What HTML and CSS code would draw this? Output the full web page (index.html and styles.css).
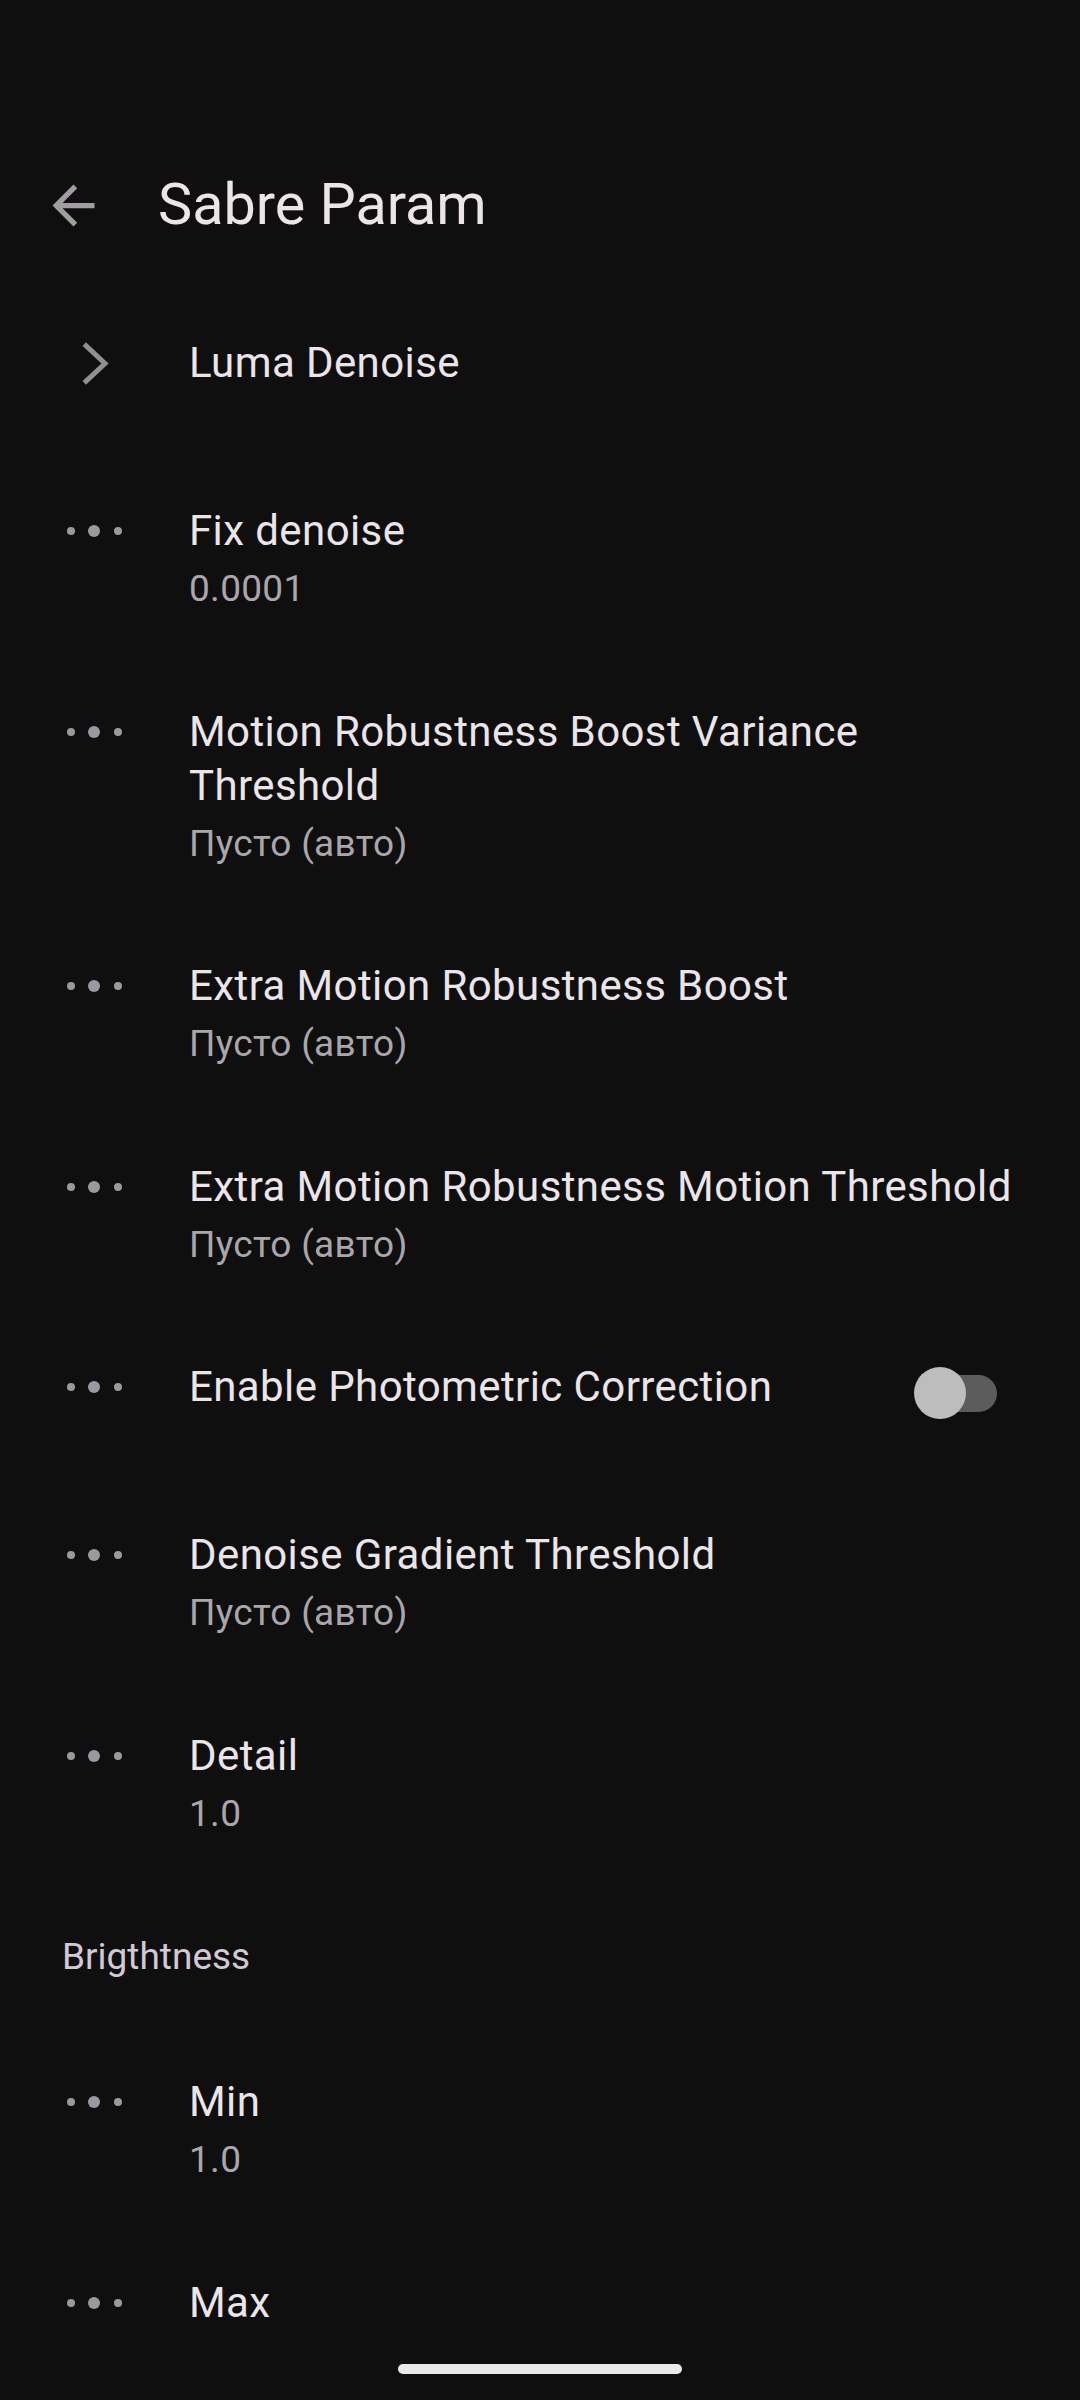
FILE: index.html
```html
<!DOCTYPE html>
<html lang="ru">
<head>
  <meta charset="UTF-8">
  <title>Sabre Param</title>
  <link rel="stylesheet" href="styles.css">
</head>
<body>
  <div class="screen">
    <header class="toolbar">
      <span class="back">
        <svg viewBox="0 0 24 24"><path d="M7.825 13l5.6 5.6L12 20l-8-8 8-8 1.425 1.4-5.6 5.6H20v2z"/></svg>
      </span>
      <h1 class="title">Sabre Param</h1>
    </header>

    <div class="list">
      <div class="row">
        <span class="icon">
          <svg class="chevron" viewBox="0 0 24 24"><polyline points="8.1,4.6 16,12 8.1,19.4"/></svg>
        </span>
        <div class="text"><div class="name">Luma Denoise</div></div>
      </div>

      <div class="row">
        <span class="icon"><svg class="dots" viewBox="0 0 63 24"><circle cx="8" cy="12" r="4"/><circle cx="31" cy="12" r="6"/><circle cx="55" cy="12" r="4"/></svg></span>
        <div class="text">
          <div class="name">Fix denoise</div>
          <div class="value">0.0001</div>
        </div>
      </div>

      <div class="row">
        <span class="icon"><svg class="dots" viewBox="0 0 63 24"><circle cx="8" cy="12" r="4"/><circle cx="31" cy="12" r="6"/><circle cx="55" cy="12" r="4"/></svg></span>
        <div class="text">
          <div class="name">Motion Robustness Boost Variance Threshold</div>
          <div class="value">Пусто (авто)</div>
        </div>
      </div>

      <div class="row">
        <span class="icon"><svg class="dots" viewBox="0 0 63 24"><circle cx="8" cy="12" r="4"/><circle cx="31" cy="12" r="6"/><circle cx="55" cy="12" r="4"/></svg></span>
        <div class="text">
          <div class="name">Extra Motion Robustness Boost</div>
          <div class="value">Пусто (авто)</div>
        </div>
      </div>

      <div class="row">
        <span class="icon"><svg class="dots" viewBox="0 0 63 24"><circle cx="8" cy="12" r="4"/><circle cx="31" cy="12" r="6"/><circle cx="55" cy="12" r="4"/></svg></span>
        <div class="text">
          <div class="name">Extra Motion Robustness Motion Threshold</div>
          <div class="value">Пусто (авто)</div>
        </div>
      </div>

      <div class="row">
        <span class="icon"><svg class="dots" viewBox="0 0 63 24"><circle cx="8" cy="12" r="4"/><circle cx="31" cy="12" r="6"/><circle cx="55" cy="12" r="4"/></svg></span>
        <div class="text"><div class="name">Enable Photometric Correction</div></div>
        <span class="switch"><span class="track"></span><span class="thumb"></span></span>
      </div>

      <div class="row">
        <span class="icon"><svg class="dots" viewBox="0 0 63 24"><circle cx="8" cy="12" r="4"/><circle cx="31" cy="12" r="6"/><circle cx="55" cy="12" r="4"/></svg></span>
        <div class="text">
          <div class="name">Denoise Gradient Threshold</div>
          <div class="value">Пусто (авто)</div>
        </div>
      </div>

      <div class="row">
        <span class="icon"><svg class="dots" viewBox="0 0 63 24"><circle cx="8" cy="12" r="4"/><circle cx="31" cy="12" r="6"/><circle cx="55" cy="12" r="4"/></svg></span>
        <div class="text">
          <div class="name">Detail</div>
          <div class="value">1.0</div>
        </div>
      </div>

      <div class="category">Brigthtness</div>

      <div class="row">
        <span class="icon"><svg class="dots" viewBox="0 0 63 24"><circle cx="8" cy="12" r="4"/><circle cx="31" cy="12" r="6"/><circle cx="55" cy="12" r="4"/></svg></span>
        <div class="text">
          <div class="name">Min</div>
          <div class="value">1.0</div>
        </div>
      </div>

      <div class="row">
        <span class="icon"><svg class="dots" viewBox="0 0 63 24"><circle cx="8" cy="12" r="4"/><circle cx="31" cy="12" r="6"/><circle cx="55" cy="12" r="4"/></svg></span>
        <div class="text"><div class="name">Max</div></div>
      </div>
    </div>

    <div class="handle"></div>
  </div>
</body>
</html>
```

FILE: styles.css
```css
body { margin: 0; background: #0f0f0f; color: #ebe5e9; font-family: Roboto, "Noto Sans", sans-serif; }
.screen { position: relative; height: 2400px; overflow: hidden; }

.toolbar { display: flex; align-items: center; height: 90px; padding: 160px 0 0 42px; }
.back { display: flex; width: 63px; height: 63px; }
.back svg { width: 63px; height: 63px; fill: #a19da3; }
.title { margin: 0 0 0 53px; font-size: 57.5px; font-weight: 400; line-height: 70px; }

.list { margin-top: 41px; }
.row { display: flex; align-items: flex-start; box-sizing: border-box; min-height: 168px; padding: 45px 42px 46.5px 63px; }
.icon { display: flex; align-items: center; justify-content: center; flex: none; width: 63px; height: 54px; margin-right: 63px; }
.dots { width: 63px; height: 24px; fill: #9d98a0; }
.chevron { width: 63px; height: 63px; fill: none; stroke: #928e94; stroke-width: 1.9; }
.text { flex: 1; min-width: 0; }
.name { font-size: 42px; line-height: 54px; letter-spacing: 0.4px; }
.value { margin-top: 7px; font-size: 37px; line-height: 48px; letter-spacing: 0.3px; color: #aaa6ab; }

.switch { position: relative; flex: none; width: 83px; height: 52px; margin: 7px 41px 0 20px; }
.track { position: absolute; right: 0; top: 8px; width: 75px; height: 37px; border-radius: 19px; background: #5c5c5c; }
.thumb { position: absolute; left: 0; top: 0; width: 52px; height: 52px; border-radius: 50%; background: #bdbdbd; }

.category { padding: 49px 0 49px 62px; font-size: 37px; line-height: 48px; color: #d3c8d6; }

.handle { position: absolute; left: 398px; bottom: 26px; width: 284px; height: 10px; border-radius: 5px; background: #e9e9e9; }
```
